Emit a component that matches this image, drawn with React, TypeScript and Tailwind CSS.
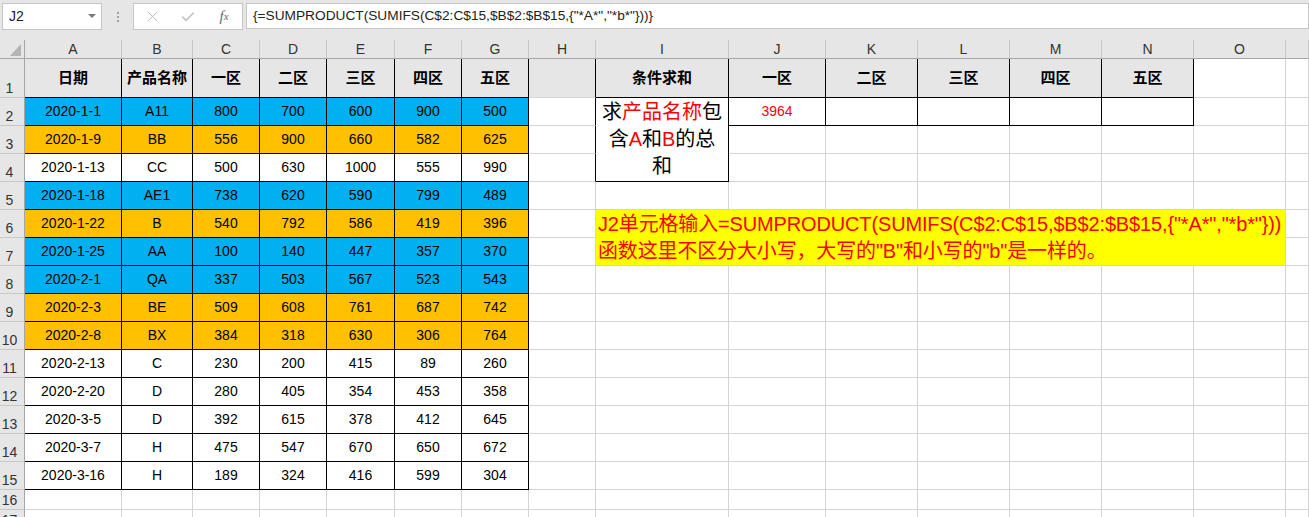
import React from 'react';
import { X, Check } from 'lucide-react';

type Fill = 'blue' | 'orange' | 'none';

interface Row {
  date: string;
  name: string;
  v: number[];
  fill: Fill;
}

const data: Row[] = [
  { date: '2020-1-1', name: 'A11', v: [800, 700, 600, 900, 500], fill: 'blue' },
  { date: '2020-1-9', name: 'BB', v: [556, 900, 660, 582, 625], fill: 'orange' },
  { date: '2020-1-13', name: 'CC', v: [500, 630, 1000, 555, 990], fill: 'none' },
  { date: '2020-1-18', name: 'AE1', v: [738, 620, 590, 799, 489], fill: 'blue' },
  { date: '2020-1-22', name: 'B', v: [540, 792, 586, 419, 396], fill: 'orange' },
  { date: '2020-1-25', name: 'AA', v: [100, 140, 447, 357, 370], fill: 'blue' },
  { date: '2020-2-1', name: 'QA', v: [337, 503, 567, 523, 543], fill: 'blue' },
  { date: '2020-2-3', name: 'BE', v: [509, 608, 761, 687, 742], fill: 'orange' },
  { date: '2020-2-8', name: 'BX', v: [384, 318, 630, 306, 764], fill: 'orange' },
  { date: '2020-2-13', name: 'C', v: [230, 200, 415, 89, 260], fill: 'none' },
  { date: '2020-2-20', name: 'D', v: [280, 405, 354, 453, 358], fill: 'none' },
  { date: '2020-3-5', name: 'D', v: [392, 615, 378, 412, 645], fill: 'none' },
  { date: '2020-3-7', name: 'H', v: [475, 547, 670, 650, 672], fill: 'none' },
  { date: '2020-3-16', name: 'H', v: [189, 324, 416, 599, 304], fill: 'none' },
];

const fillClass: Record<Fill, string> = {
  blue: 'bg-[#00b0f0]',
  orange: 'bg-[#ffc000]',
  none: 'bg-white',
};

const zones = ['一区', '二区', '三区', '四区', '五区'];
const COLS = ['A', 'B', 'C', 'D', 'E', 'F', 'G', 'H', 'I', 'J', 'K', 'L', 'M', 'N', 'O', 'P'];

// c: 1 = A ... 16 = P
const inBox = (r: number, c: number) => {
  if (r >= 1 && r <= 15 && c >= 1 && c <= 7) return true;
  if (r >= 1 && r <= 2 && c >= 9 && c <= 14) return true;
  if (r >= 3 && r <= 4 && c === 9) return true;
  return false;
};

const edge = (r: number, c: number) => {
  const right = inBox(r, c) || inBox(r, c + 1);
  const bottom = inBox(r, c) || inBox(r + 1, c);
  return `${right ? 'border-r-black' : 'border-r-[#d4d4d4]'} ${bottom ? 'border-b-black' : 'border-b-[#d4d4d4]'}`;
};

// cells hidden under a merged range
const covered = (r: number, c: number) => {
  if ((r === 3 || r === 4) && c === 9) return true;
  if (r === 6 && c >= 10 && c <= 15) return true;
  if (r === 7 && c >= 9 && c <= 15) return true;
  return false;
};

const base = 'border-r border-b flex items-center justify-center overflow-hidden whitespace-nowrap';

const renderCell = (r: number, c: number) => {
  const key = `c${r}-${c}`;

  if (r === 2 && c === 9) {
    return (
      <div key={key} className={`row-span-3 ${base} ${edge(4, 9)} flex-col bg-white text-[20px] leading-[27px] text-black`}>
        <span>求<span className="text-[#ff0000]">产品名称</span>包</span>
        <span>含<span className="text-[#ff0000]">A</span>和<span className="text-[#ff0000]">B</span>的总</span>
        <span>和</span>
      </div>
    );
  }

  if (r === 6 && c === 9) {
    return (
      <div key={key} className={`col-span-7 row-span-2 ${base} ${edge(7, 15)} flex-col !items-start bg-[#ffff00] pl-[2px] text-[20px] leading-[27px] tracking-[-0.15px] text-[#ff0000]`}>
        <span>{'J2单元格输入=SUMPRODUCT(SUMIFS(C$2:C$15,$B$2:$B$15,{"*A*","*b*"}))'}</span>
        <span>{'函数这里不区分大小写，大写的"B"和小写的"b"是一样的。'}</span>
      </div>
    );
  }

  let content: React.ReactNode = null;
  let bg = 'bg-white';
  let text = 'text-[14px] text-black';

  if (r === 1) {
    if (c <= 14) bg = 'bg-[#e7e6e6]';
    text = 'text-[15px] font-bold text-black';
    if (c === 1) content = '日期';
    if (c === 2) content = '产品名称';
    if (c >= 3 && c <= 7) content = zones[c - 3];
    if (c === 9) content = '条件求和';
    if (c >= 10 && c <= 14) content = zones[c - 10];
  } else if (r >= 2 && r <= 15) {
    const row = data[r - 2];
    if (c <= 7) bg = fillClass[row.fill];
    if (c === 1) content = row.date;
    if (c === 2) content = row.name;
    if (c >= 3 && c <= 7) content = row.v[c - 3];
    if (r === 2 && c === 10) {
      content = '3964';
      text = 'text-[14px] text-[#ff0000]';
    }
  }

  return (
    <div key={key} className={`${base} ${edge(r, c)} ${bg} ${text}`}>
      {content}
    </div>
  );
};

const FormulaBar = () => (
  <div className="h-[40px] bg-[#e6e6e6] pt-[3px] pl-[2px] flex items-start">
    <div className="w-[100px] h-[27px] bg-white border border-[#c6c6c6] flex items-center justify-between pl-[6px] pr-[5px]">
      <span className="text-[14px] text-[#222]">J2</span>
      <svg width="8" height="5" viewBox="0 0 8 5">
        <polygon points="0,0 8,0 4,4" fill="#7a7a7a" />
      </svg>
    </div>
    <div className="w-[31px] h-[27px] flex flex-col items-center justify-center gap-[2px]">
      <span className="w-[2px] h-[2px] bg-[#a0a0a0]" />
      <span className="w-[2px] h-[2px] bg-[#a0a0a0]" />
      <span className="w-[2px] h-[2px] bg-[#a0a0a0]" />
    </div>
    <div className="w-[110px] h-[27px] bg-white border border-[#c6c6c6] flex items-center">
      <div className="w-[36px] flex justify-center">
        <X size={17} strokeWidth={1.4} color="#bdbdbd" />
      </div>
      <div className="w-[36px] flex justify-center">
        <Check size={16} strokeWidth={2.5} color="#c4c4c4" />
      </div>
      <div className="w-[36px] flex justify-center font-['Liberation_Serif',serif] italic text-[15px] text-[#6b6b6b]">
        f<span className="text-[11px] mt-[3px]">x</span>
      </div>
    </div>
    <div className="ml-[3px] flex-1 h-[26px] bg-white border border-[#c6c6c6] flex items-center pl-[6px] text-[13.7px] text-[#222] whitespace-nowrap">
      {'{=SUMPRODUCT(SUMIFS(C$2:C$15,$B$2:$B$15,{"*A*","*b*"}))}'}
    </div>
  </div>
);

export default function App() {
  const cells: React.ReactNode[] = [];

  cells.push(
    <div key="corner" className="bg-[#e6e6e6] border-r border-b border-r-[#a6a6a6] border-b-[#a6a6a6] flex items-end justify-end pr-[3px] pb-[2px]">
      <svg width="11" height="12" viewBox="0 0 11 12">
        <polygon points="11,0 11,12 0,12" fill="#b4b4b4" />
      </svg>
    </div>
  );
  COLS.forEach((L) =>
    cells.push(
      <div key={`h${L}`} className="bg-[#e6e6e6] border-r border-b border-r-[#c8c8c8] border-b-[#a6a6a6] flex items-center justify-center text-[14px] text-[#333] overflow-hidden">
        {L === 'P' ? '' : L}
      </div>
    )
  );

  for (let r = 1; r <= 17; r++) {
    cells.push(
      <div key={`r${r}`} className="bg-[#e6e6e6] border-r border-b border-r-[#a6a6a6] border-b-[#c8c8c8] flex items-end justify-center pr-[5px] text-[14px] leading-[18px] text-[#333]">
        {r}
      </div>
    );
    for (let c = 1; c <= 16; c++) {
      if (covered(r, c)) continue;
      cells.push(renderCell(r, c));
    }
  }

  return (
    <div className="w-[1309px] h-[517px] overflow-hidden bg-white font-['Liberation_Sans','Noto_Sans_CJK_SC',sans-serif]">
      <FormulaBar />
      <div className="h-[477px] overflow-hidden">
        <div className="grid grid-cols-[25px_97px_71px_67px_67px_68px_67px_67px_67px_133px_97px_92px_92px_92px_92px_92px_23px] grid-rows-[19px_39px_repeat(14,28px)_20px_20px]">
          {cells}
        </div>
      </div>
    </div>
  );
}
